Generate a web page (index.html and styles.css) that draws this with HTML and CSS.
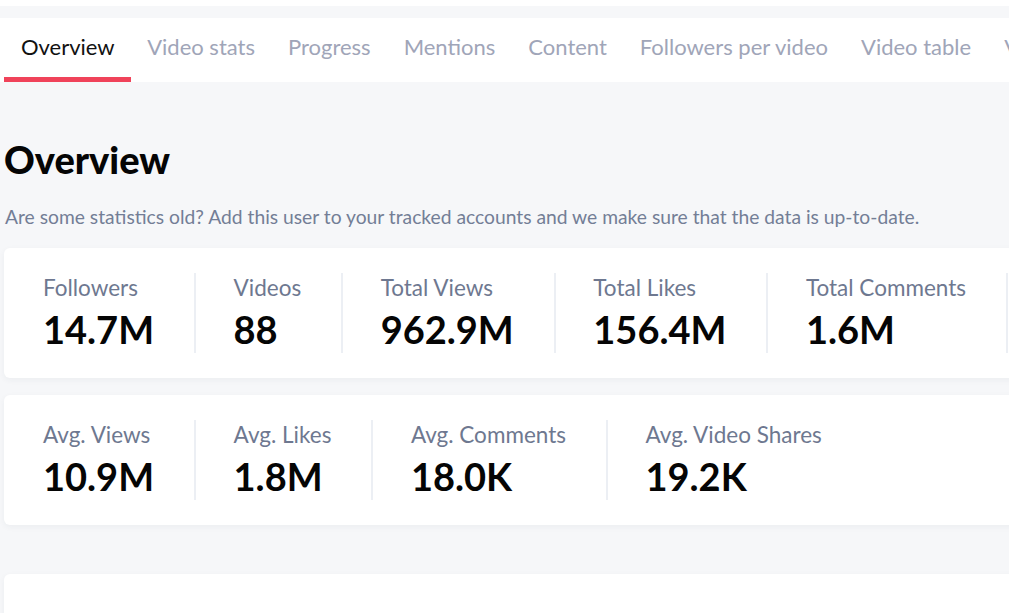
FILE: index.html
```html
<!DOCTYPE html>
<html lang="en">
<head>
<meta charset="utf-8">
<title>Overview</title>
<link rel="stylesheet" href="styles.css">
</head>
<body>
<div class="topstrip"></div>
<nav class="tabs">
  <a class="tab active">Overview</a>
  <a class="tab">Video stats</a>
  <a class="tab">Progress</a>
  <a class="tab">Mentions</a>
  <a class="tab">Content</a>
  <a class="tab">Followers per video</a>
  <a class="tab">Video table</a>
  <a class="tab">V</a>
</nav>
<main class="main">
  <h1 class="title">Overview</h1>
  <p class="subtitle">Are some statistics old? Add this user to your tracked accounts and we make sure that the data is up-to-date.</p>
  <section class="card stats">
    <div class="stat"><div class="label">Followers</div><div class="value">14.7M</div></div>
    <div class="stat"><div class="label">Videos</div><div class="value">88</div></div>
    <div class="stat"><div class="label">Total Views</div><div class="value">962.9M</div></div>
    <div class="stat"><div class="label">Total Likes</div><div class="value">156.4M</div></div>
    <div class="stat"><div class="label">Total Comments</div><div class="value">1.6M</div></div>
  </section>
  <section class="card stats">
    <div class="stat"><div class="label">Avg. Views</div><div class="value">10.9M</div></div>
    <div class="stat"><div class="label">Avg. Likes</div><div class="value">1.8M</div></div>
    <div class="stat"><div class="label">Avg. Comments</div><div class="value">18.0K</div></div>
    <div class="stat last"><div class="label">Avg. Video Shares</div><div class="value">19.2K</div></div>
  </section>
  <section class="card next"></section>
</main>
</body>
</html>
```
FILE: styles.css
```css
html, body {
  margin: 0;
  padding: 0;
}
body {
  width: 1009px;
  height: 613px;
  overflow: hidden;
  background: #f6f7f9;
  font-family: Lato, "Open Sans", sans-serif;
}
.topstrip {
  height: 6px;
  background: #ffffff;
}
.tabs {
  margin-top: 12px;
  height: 64px;
  background: #ffffff;
  display: flex;
  padding-left: 4px;
  white-space: nowrap;
  overflow: hidden;
}
.tab {
  display: block;
  flex: none;
  padding: 15px 16.5px 0 16.5px;
  font-size: 22px;
  color: #a0a5b8;
  height: 49px;
  box-sizing: content-box;
}
.tab.active {
  color: #111111;
  padding-left: 17px;
  padding-right: 16px;
  border-bottom: 5px solid #f0435a;
  height: 44px;
}
.main {
  margin-left: 4px;
  width: 1100px;
  padding-top: 52px;
}
.title {
  margin: 0;
  font-size: 38px;
  font-weight: 900;
  line-height: 50px;
  color: #050505;
}
.subtitle {
  margin: 22px 0 0 1px;
  font-size: 19.25px;
  line-height: 22px;
  color: #737e96;
  white-space: nowrap;
}
.card {
  background: #ffffff;
  border-radius: 6px;
  box-shadow: 0 2px 6px rgba(40, 50, 80, 0.05);
}
.stats {
  display: flex;
  height: 130px;
  align-items: center;
  padding-left: 39px;
  margin-top: 20px;
}
.stats + .stats {
  margin-top: 17px;
}
.stat {
  flex: none;
  white-space: nowrap;
  padding: 0 40px 0 0;
  margin-right: 37.5px;
  border-right: 2.5px solid #eceff4;
  height: 80px;
  box-sizing: border-box;
}
.stat.last {
  border-right: none;
}
.label {
  font-size: 22.5px;
  line-height: 26px;
  color: #6e7890;
  padding-top: 2px;
}
.value {
  font-size: 38px;
  font-weight: 700;
  line-height: 44px;
  color: #050505;
  margin-top: 6px;
}
.next {
  margin-top: 49px;
  height: 60px;
}
```
